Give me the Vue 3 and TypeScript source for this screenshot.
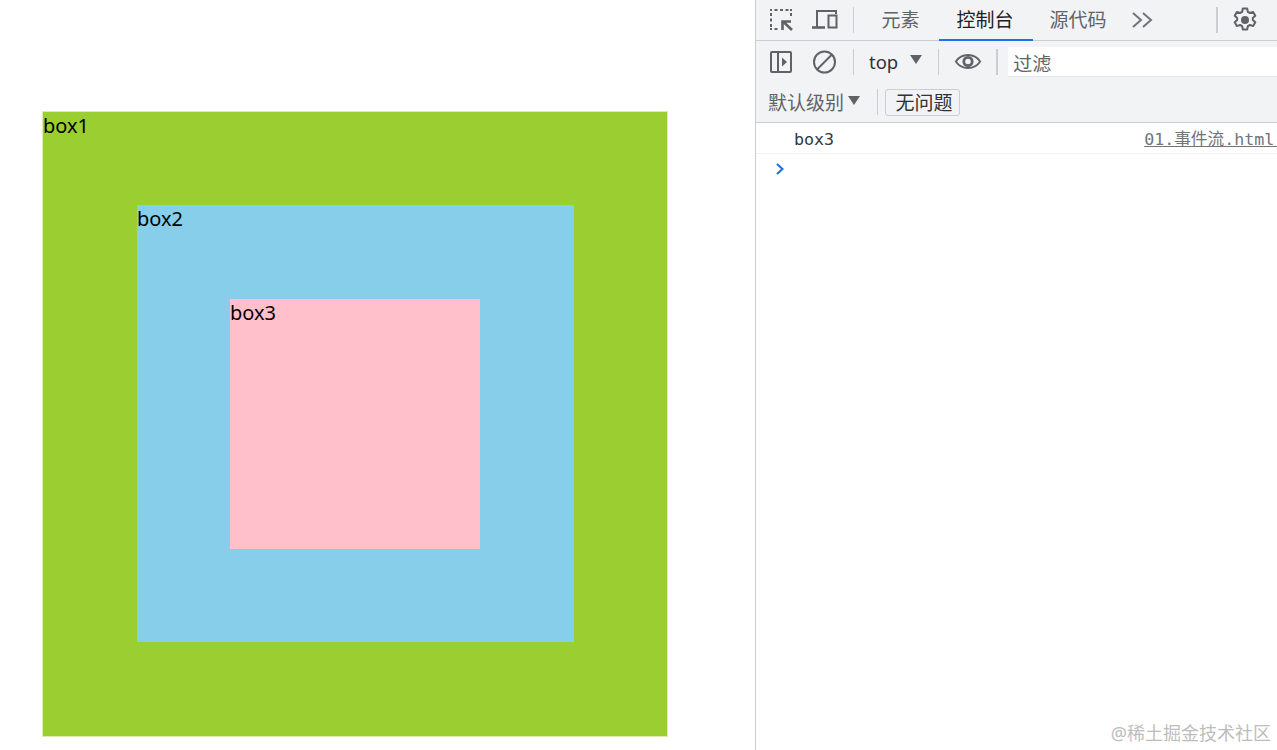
<script setup lang="ts">
const tabs: { label: string; active?: boolean }[] = [
  { label: '元素' },
  { label: '控制台', active: true },
  { label: '源代码' },
]
</script>

<template>
  <div class="screen">
    <main class="page">
      <div class="box box1">
        <span class="label">box1</span>
        <div class="box box2">
          <span class="label">box2</span>
          <div class="box box3">
            <span class="label">box3</span>
          </div>
        </div>
      </div>
    </main>

    <aside class="devtools">
      <div class="bar tabsbar">
        <button class="icon first" aria-label="inspect">
          <svg width="26" height="26" viewBox="0 0 26 26" fill="none" stroke="#5f6368">
            <path d="M2 3h2M6.500 3h3M12 3h3M17.500 3h3M22 3h2M23 6v3M3 6v3M3 11.500v3M3 17v3M2 22h2M6.500 22h3" stroke-width="2" />
            <path d="M24 23 L14.500 14 M14.500 23 V14.500 H23" stroke-width="2.6" />
          </svg>
        </button>
        <button class="icon second" aria-label="device">
          <svg class="over" width="26" height="26" viewBox="0 0 26 26" fill="none" stroke="#5f6368" stroke-width="2">
            <path d="M7 20V4h19v3" />
            <path d="M2 20.500h13" stroke-width="2.600" />
            <rect x="18.500" y="8.500" width="8" height="12" />
          </svg>
        </button>
        <i class="sep sep-a"></i>
        <div class="tabs">
          <span v-for="t in tabs" :key="t.label" class="tab" :class="{ active: t.active }">{{ t.label }}</span>
        </div>
        <svg class="more" width="22" height="18" viewBox="0 0 22 18" fill="none" stroke="#70757a" stroke-width="2">
          <path d="M1 2l8 7-8 7M11 2l8 7-8 7" />
        </svg>
        <span class="grow"></span>
        <i class="sep sep-b"></i>
        <button class="icon gear" aria-label="settings">
          <svg width="26" height="26" viewBox="0 0 26 26" fill="none" stroke="#5f6368">
            <path stroke-width="2" stroke-linejoin="round" d="M10.800 1.500h4.400l.6 3.300 2.200 1.200 3.100-1.100 2.200 3.800-2.500 2.200.1 1.100-.1 1.100 2.500 2.200-2.200 3.800-3.100-1.100-2.200 1.200-.6 3.300h-4.400l-.6-3.300-2.200-1.200-3.100 1.100-2.200-3.800 2.500-2.200-.1-1.100.1-1.100-2.500-2.200 2.200-3.800 3.100 1.100 2.200-1.200z" />
            <circle cx="13" cy="13" r="4" fill="#5f6368" stroke="none" />
          </svg>
        </button>
      </div>

      <div class="bar filterbar">
        <button class="icon first" aria-label="sidebar">
          <svg width="26" height="26" viewBox="0 0 26 26" fill="none" stroke="#5f6368" stroke-width="2">
            <rect x="3" y="3" width="20" height="20" rx="1" />
            <path d="M10 3v20" />
            <path d="M14 8.500l5 4.500-5 4.500z" fill="#5f6368" stroke="none" />
          </svg>
        </button>
        <button class="icon second" aria-label="clear">
          <svg width="26" height="26" viewBox="0 0 26 26" fill="none" stroke="#5f6368" stroke-width="2">
            <circle cx="14.500" cy="13" r="10.500" />
            <path d="M7 20.500L22 5.500" />
          </svg>
        </button>
        <i class="sep sep-a"></i>
        <span class="top">top</span>
        <i class="caret top-caret"></i>
        <i class="sep sep-c"></i>
        <svg class="eye" width="28" height="19" viewBox="0 0 30 20" fill="none" stroke="#5f6368" stroke-width="2">
          <path d="M2 10c3-4.600 7.500-7 13-7s10 2.400 13 7c-3 4.600-7.500 7-13 7s-10-2.400-13-7z" />
          <circle cx="15" cy="10" r="4.500" stroke-width="3" />
        </svg>
        <i class="sep sep-d"></i>
        <div class="filter">过滤</div>
      </div>

      <div class="bar levelbar">
        <span class="level">默认级别</span>
        <i class="caret level-caret"></i>
        <i class="sep sep-e"></i>
        <span class="issues">无问题</span>
      </div>

      <div class="logrow">
        <span class="msg">box3</span>
        <span class="src">01.事件流.html:</span>
      </div>
      <div class="prompt">
        <svg width="10" height="14" viewBox="0 0 10 14" fill="none" stroke="#1a6ee0" stroke-width="2">
          <path d="M2 2l5.500 5-5.500 5" />
        </svg>
      </div>
    </aside>

    <div class="watermark">@稀土掘金技术社区</div>
  </div>
</template>

<style scoped>
.screen {
  position: relative;
  display: flex;
  width: 1277px;
  height: 750px;
  overflow: hidden;
  background: #fff;
  font-family: "Noto Sans", "Noto Sans CJK SC", sans-serif;
}

.page {
  width: 755px;
  flex: none;
  padding: 112px 0 0 43px;
  box-sizing: border-box;
}

.box {
  box-sizing: border-box;
  color: #000;
  font-size: 20px;
  line-height: 28px;
}

.label {
  display: block;
  height: 28px;
}

.box1 {
  width: 624px;
  height: 624px;
  background: #9bce30;
  outline: 1px solid #dcedb4;
}

.box2 {
  width: 437px;
  height: 437px;
  margin: 65px 0 0 94px;
  background: #87ceeb;
}

.box3 {
  width: 250px;
  height: 250px;
  margin: 66px 0 0 93px;
  background: #ffc0cb;
}

.devtools {
  flex: 1;
  min-width: 0;
  border-left: 1px solid #cbcdd1;
  display: flex;
  flex-direction: column;
}

.bar {
  display: flex;
  align-items: center;
  box-sizing: border-box;
  background: #f1f3f4;
  flex: none;
}

.tabsbar {
  height: 41px;
  border-bottom: 1px solid #cbcdd1;
}

.filterbar {
  height: 41px;
}

.levelbar {
  height: 41px;
  border-bottom: 1px solid #cbcdd1;
}

.icon {
  display: flex;
  padding: 0;
  border: 0;
  background: none;
}

.over {
  overflow: visible;
}

.first {
  margin-left: 12px;
}

.second {
  margin-left: 16px;
}

.sep {
  display: block;
  width: 1px;
  height: 26px;
  background: #cbcdd1;
  flex: none;
}

.sep-a {
  margin-left: 17px;
}

.tabs {
  display: flex;
  height: 40px;
  margin-left: 9px;
}

.tab {
  box-sizing: border-box;
  text-align: center;
  font-size: 19px;
  line-height: 40px;
  color: #5f6368;
}

.tab.active {
  color: #202124;
  border-bottom: 2px solid #1a73e8;
  height: 41px;
}

.tabs .tab:nth-child(1) {
  width: 75px;
  margin-right: 1px;
}

.tabs .tab:nth-child(2) {
  width: 94px;
  padding-right: 2px;
}

.tabs .tab:nth-child(3) {
  width: 90px;
}

.more {
  margin-left: 9px;
}

.grow {
  flex: 1;
}

.sep-b {
  width: 2px;
  margin-right: 14px;
}

.gear {
  margin-right: 19px;
}

.top {
  margin-left: 15px;
  font-size: 18.500px;
  color: #303236;
}

.caret {
  display: block;
  width: 0;
  height: 0;
  border-left: 6px solid transparent;
  border-right: 6px solid transparent;
  border-top: 9px solid #5f6368;
}

.top-caret {
  margin-left: 12px;
  margin-top: -4px;
}

.sep-c {
  margin-left: 16px;
}

.eye {
  margin-left: 15px;
}

.sep-d {
  width: 2px;
  margin-left: 14px;
}

.filter {
  flex: 1;
  height: 29px;
  margin-left: 10px;
  padding-left: 5px;
  background: #fff;
  border-bottom: 1px solid #e4e6e8;
  font-size: 19px;
  line-height: 35px;
  color: #5f6368;
}

.level {
  margin-left: 12px;
  font-size: 19px;
  color: #5f6368;
}

.level-caret {
  margin-left: 4px;
  margin-top: -3px;
}

.sep-e {
  margin-left: 17px;
}

.issues {
  margin-left: 7px;
  width: 75px;
  height: 27px;
  box-sizing: border-box;
  border: 1px solid #cbcdd1;
  border-radius: 3px;
  padding-left: 3px;
  font-size: 19px;
  line-height: 26px;
  text-align: center;
  color: #303236;
}

.logrow {
  display: flex;
  align-items: baseline;
  height: 31px;
  box-sizing: border-box;
  padding-top: 4px;
  border-bottom: 1px solid #f0f0f0;
  flex: none;
  font-family: "DejaVu Sans Mono", "Noto Sans CJK SC", monospace;
  font-size: 16.670px;
  line-height: 26px;
  white-space: nowrap;
  overflow: hidden;
}

.msg {
  margin-left: 38px;
  color: #303942;
}

.src {
  margin-left: 310px;
  color: #70757a;
  text-decoration: underline;
  flex: none;
}

.prompt {
  display: flex;
  padding: 8px 0 0 19px;
}

.watermark {
  position: absolute;
  right: 6px;
  bottom: 5px;
  font-size: 18px;
  line-height: 24px;
  color: #bdbdbd;
}
</style>
